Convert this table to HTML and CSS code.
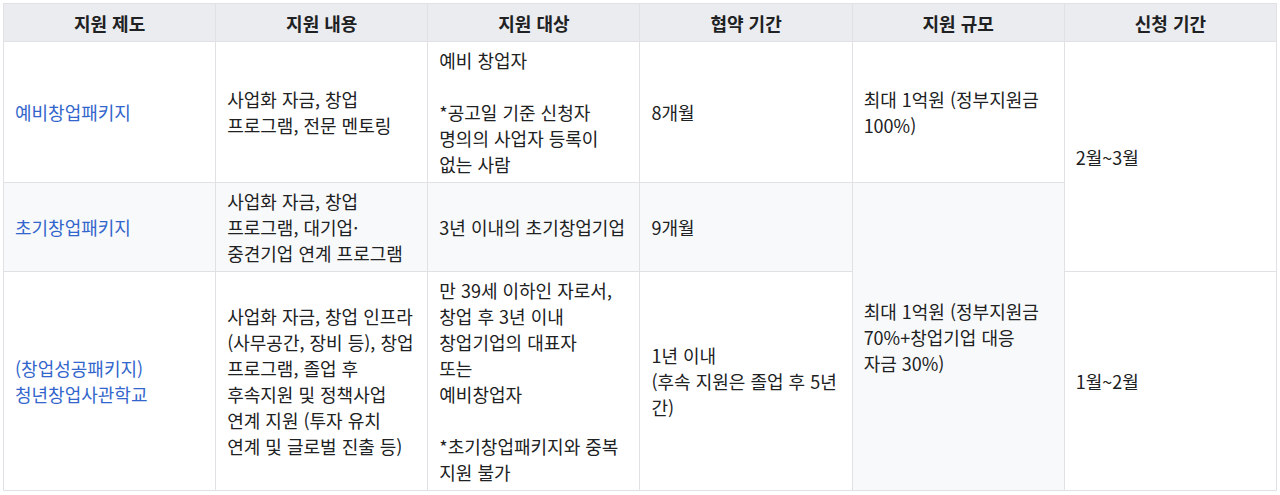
FILE: index.html
```html
<!DOCTYPE html>
<html lang="ko">
<head>
<meta charset="utf-8">
<title>창업 지원 제도</title>
<link rel="stylesheet" href="styles.css">
</head>
<body>
<table class="grid">
  <colgroup>
    <col class="col"><col class="col"><col class="col"><col class="col"><col class="col"><col class="col">
  </colgroup>
  <thead>
    <tr>
      <th>지원 제도</th>
      <th>지원 내용</th>
      <th>지원 대상</th>
      <th>협약 기간</th>
      <th>지원 규모</th>
      <th>신청 기간</th>
    </tr>
  </thead>
  <tbody>
    <tr class="row-odd">
      <td><a class="link" href="#">예비창업패키지</a></td>
      <td>사업화 자금, 창업<br>프로그램, 전문 멘토링</td>
      <td>예비 창업자<br><br>*공고일 기준 신청자<br>명의의 사업자 등록이<br>없는 사람</td>
      <td>8개월</td>
      <td>최대 1억원 (정부지원금<br>100%)</td>
      <td rowspan="2">2월~3월</td>
    </tr>
    <tr class="row-even">
      <td><a class="link" href="#">초기창업패키지</a></td>
      <td>사업화 자금, 창업<br>프로그램, 대기업·<br>중견기업 연계 프로그램</td>
      <td>3년 이내의 초기창업기업</td>
      <td>9개월</td>
      <td rowspan="2">최대 1억원 (정부지원금<br>70%+창업기업 대응<br>자금 30%)</td>
    </tr>
    <tr class="row-odd">
      <td><a class="link" href="#">(창업성공패키지)<br>청년창업사관학교</a></td>
      <td>사업화 자금, 창업 인프라<br>(사무공간, 장비 등), 창업<br>프로그램, 졸업 후<br>후속지원 및 정책사업<br>연계 지원 (투자 유치<br>연계 및 글로벌 진출 등)</td>
      <td>만 39세 이하인 자로서,<br>창업 후 3년 이내<br>창업기업의 대표자<br>또는<br>예비창업자<br><br>*초기창업패키지와 중복<br>지원 불가</td>
      <td>1년 이내<br>(후속 지원은 졸업 후 5년<br>간)</td>
      <td>1월~2월</td>
    </tr>
  </tbody>
</table>
</body>
</html>
```

FILE: styles.css
```css
html, body {
  margin: 0;
  padding: 0;
  background: #ffffff;
}

body {
  font-family: "Noto Sans CJK KR", "Noto Sans", sans-serif;
  font-size: 18px;
  color: #202122;
}

.grid {
  margin: 3px 0 0 3px;
  width: 1274px;
  border-collapse: collapse;
  table-layout: fixed;
  border: 1px solid #dfe1e4;
}

.col {
  width: 16.6667%;
}

.grid th,
.grid td {
  border: 1px solid #dfe1e4;
  line-height: 26px;
  vertical-align: middle;
  white-space: nowrap;
}

.grid th {
  background: #eaecf0;
  font-weight: 700;
  text-align: center;
  padding: 6px 11px 5px;
}

.grid td {
  text-align: left;
  padding: 5px 11px;
  background: #ffffff;
}

.row-even td {
  background: #f8f9fa;
}

.link {
  color: #3366cc;
  text-decoration: none;
}
```
